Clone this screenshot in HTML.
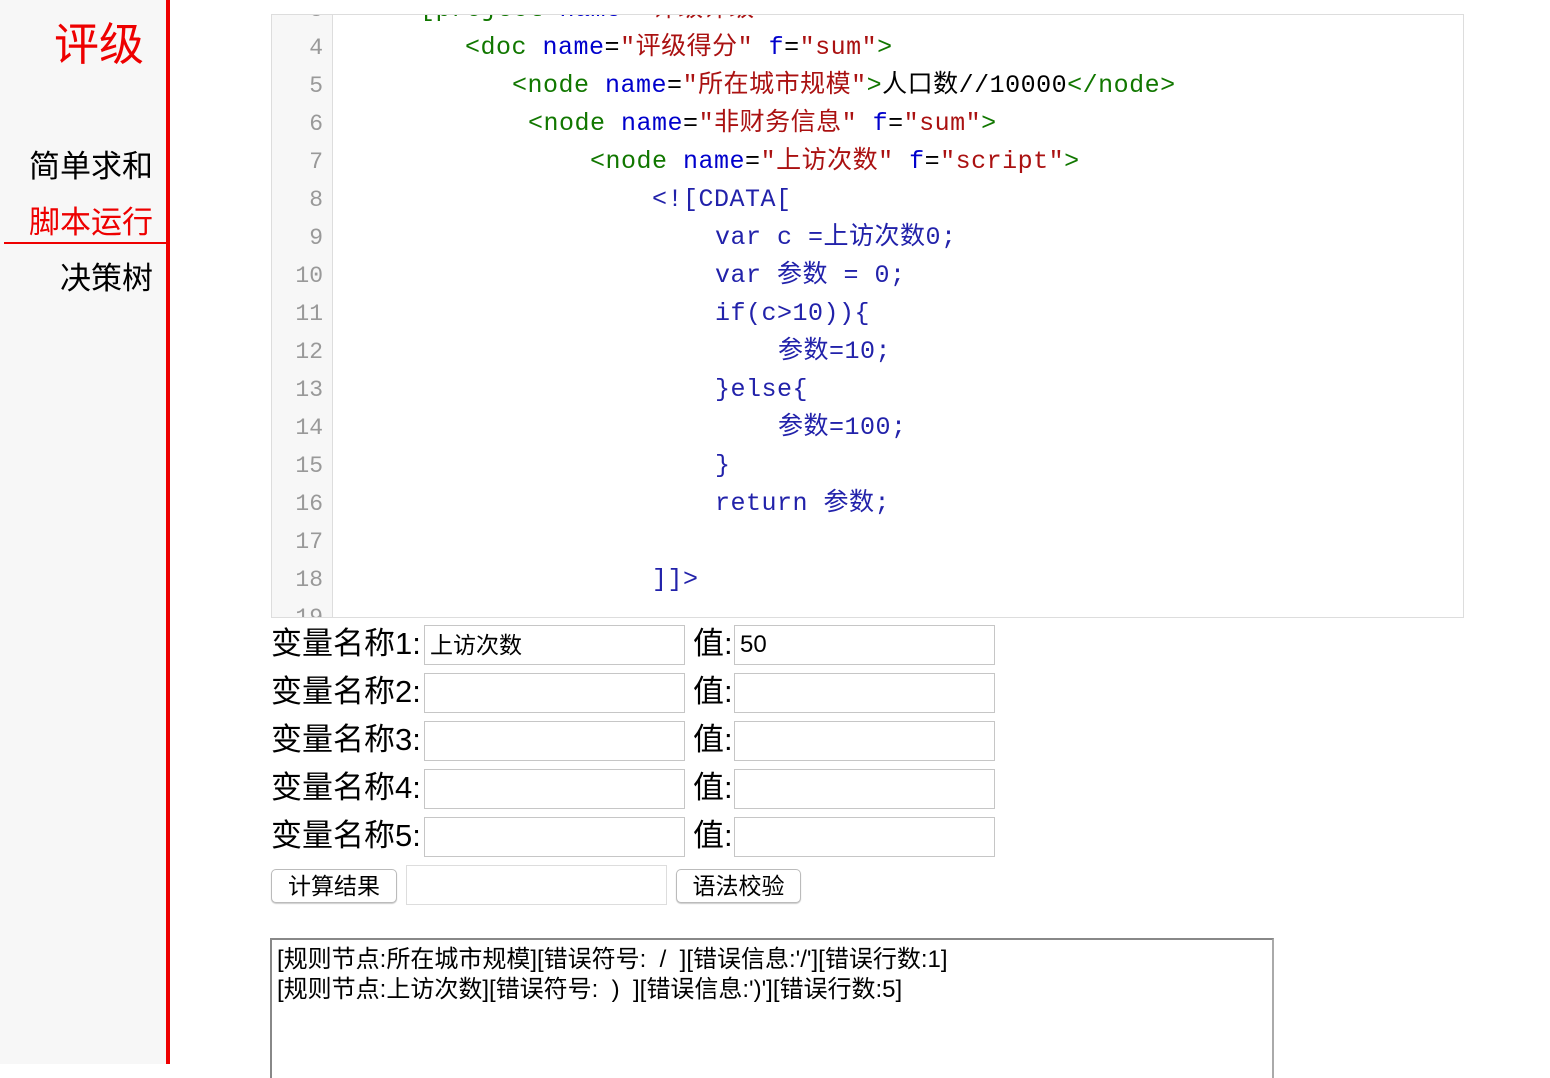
<!DOCTYPE html>
<html><head><meta charset="utf-8"><style>
*{margin:0;padding:0;box-sizing:border-box}
body{width:1550px;height:1064px;overflow:hidden;background:#fff;position:relative;font-family:"Liberation Sans","Noto Sans CJK SC",sans-serif}
.side{position:absolute;left:0;top:0;height:1064px;background:#f7f7f7;border-right:4px solid #e00;width:170px}
.abs{position:absolute;white-space:nowrap}
.title{right:1406px;top:15px;font-size:45px;color:#e00;line-height:60px}
.mi{font-size:31px;line-height:40px;right:1397px}
.code{position:absolute;left:271px;top:14px;width:1193px;height:604px;border:1px solid #ddd;overflow:hidden}
.gut{position:absolute;left:0;top:0;width:61px;height:100%;background:#f7f7f7;border-right:1px solid #ddd}
.ln{position:absolute;right:1140px;font-family:"Liberation Mono",monospace;font-size:23px;color:#999;line-height:38px;text-align:right;width:50px}
.cl{position:absolute;font-family:"Liberation Mono","Noto Sans CJK SC",monospace;font-size:25px;letter-spacing:0.5px;line-height:38px;white-space:pre;color:#000}
.t{color:#170}.a{color:#00c}.s{color:#a11}.v{color:#22a}
.lab{font-size:31px;line-height:40px;color:#000}
.inp{position:absolute;border:1px solid #c6c6c6;background:#fff;height:40px;font-size:23px;line-height:38px;padding-left:5px}
.btn{position:absolute;border:1px solid #bbb;border-radius:5px;background:#fff;box-shadow:0 1px 1px #ccc;font-size:23px;text-align:center;line-height:32px;height:34px}
.ta{position:absolute;left:270px;top:938px;width:1004px;height:140px;border:2px solid #888;border-right-color:#aaa;border-bottom:none;padding:5px 5px;font-size:24px;line-height:30px;white-space:pre}
</style></head><body>
<div class="side"></div>
<div class="abs title">评级</div>
<div class="abs mi" style="top:147px">简单求和</div>
<div class="abs mi" style="top:203px;color:#e00">脚本运行</div>
<div class="abs" style="left:4px;top:242px;width:162px;height:2px;background:#e00"></div>
<div class="abs mi" style="top:259px">决策树</div>

<div class="code"><div class="gut"></div>
<div class="ln" style="top:-24px">3</div>
<div class="ln" style="top:14px">4</div>
<div class="ln" style="top:52px">5</div>
<div class="ln" style="top:90px">6</div>
<div class="ln" style="top:128px">7</div>
<div class="ln" style="top:166px">8</div>
<div class="ln" style="top:204px">9</div>
<div class="ln" style="top:242px">10</div>
<div class="ln" style="top:280px">11</div>
<div class="ln" style="top:318px">12</div>
<div class="ln" style="top:356px">13</div>
<div class="ln" style="top:394px">14</div>
<div class="ln" style="top:432px">15</div>
<div class="ln" style="top:470px">16</div>
<div class="ln" style="top:508px">17</div>
<div class="ln" style="top:546px">18</div>
<div class="ln" style="top:584px">19</div>
<div class="cl" style="left:148px;top:-24px"><span class="t">[project</span> <span class="a">name</span>=<span class="s">"评级评级"</span></div>
<div class="cl" style="left:193px;top:14px"><span class="t">&lt;doc</span> <span class="a">name</span>=<span class="s">"评级得分"</span> <span class="a">f</span>=<span class="s">"sum"</span><span class="t">&gt;</span></div>
<div class="cl" style="left:240px;top:52px"><span class="t">&lt;node</span> <span class="a">name</span>=<span class="s">"所在城市规模"</span><span class="t">&gt;</span>人口数//10000<span class="t">&lt;/node&gt;</span></div>
<div class="cl" style="left:256px;top:90px"><span class="t">&lt;node</span> <span class="a">name</span>=<span class="s">"非财务信息"</span> <span class="a">f</span>=<span class="s">"sum"</span><span class="t">&gt;</span></div>
<div class="cl" style="left:318px;top:128px"><span class="t">&lt;node</span> <span class="a">name</span>=<span class="s">"上访次数"</span> <span class="a">f</span>=<span class="s">"script"</span><span class="t">&gt;</span></div>
<div class="cl v" style="left:380px;top:166px">&lt;![CDATA[</div>
<div class="cl v" style="left:443px;top:204px">var c =上访次数0;</div>
<div class="cl v" style="left:443px;top:242px">var 参数 = 0;</div>
<div class="cl v" style="left:443px;top:280px">if(c&gt;10)){</div>
<div class="cl v" style="left:506px;top:318px">参数=10;</div>
<div class="cl v" style="left:443px;top:356px">}else{</div>
<div class="cl v" style="left:506px;top:394px">参数=100;</div>
<div class="cl v" style="left:443px;top:432px">}</div>
<div class="cl v" style="left:443px;top:470px">return 参数;</div>
<div class="cl v" style="left:380px;top:546px">]]&gt;</div>
</div>

<div class="abs lab" style="left:271px;top:624px">变量名称1:</div>
<div class="inp" style="left:424px;top:625px;width:261px">上访次数</div>
<div class="abs lab" style="left:693px;top:624px">值:</div>
<div class="inp" style="left:734px;top:625px;width:261px;font-size:24px">50</div>

<div class="abs lab" style="left:271px;top:672px">变量名称2:</div>
<div class="inp" style="left:424px;top:673px;width:261px"></div>
<div class="abs lab" style="left:693px;top:672px">值:</div>
<div class="inp" style="left:734px;top:673px;width:261px"></div>

<div class="abs lab" style="left:271px;top:720px">变量名称3:</div>
<div class="inp" style="left:424px;top:721px;width:261px"></div>
<div class="abs lab" style="left:693px;top:720px">值:</div>
<div class="inp" style="left:734px;top:721px;width:261px"></div>

<div class="abs lab" style="left:271px;top:768px">变量名称4:</div>
<div class="inp" style="left:424px;top:769px;width:261px"></div>
<div class="abs lab" style="left:693px;top:768px">值:</div>
<div class="inp" style="left:734px;top:769px;width:261px"></div>

<div class="abs lab" style="left:271px;top:816px">变量名称5:</div>
<div class="inp" style="left:424px;top:817px;width:261px"></div>
<div class="abs lab" style="left:693px;top:816px">值:</div>
<div class="inp" style="left:734px;top:817px;width:261px"></div>

<div class="btn" style="left:271px;top:869px;width:126px">计算结果</div>
<div class="inp" style="left:406px;top:865px;width:261px;border-color:#ddd"></div>
<div class="btn" style="left:676px;top:869px;width:125px">语法校验</div>

<div class="ta">[规则节点:所在城市规模][错误符号:  /  ][错误信息:'/'][错误行数:1]
[规则节点:上访次数][错误符号:  )  ][错误信息:')'][错误行数:5]</div>
</body></html>
